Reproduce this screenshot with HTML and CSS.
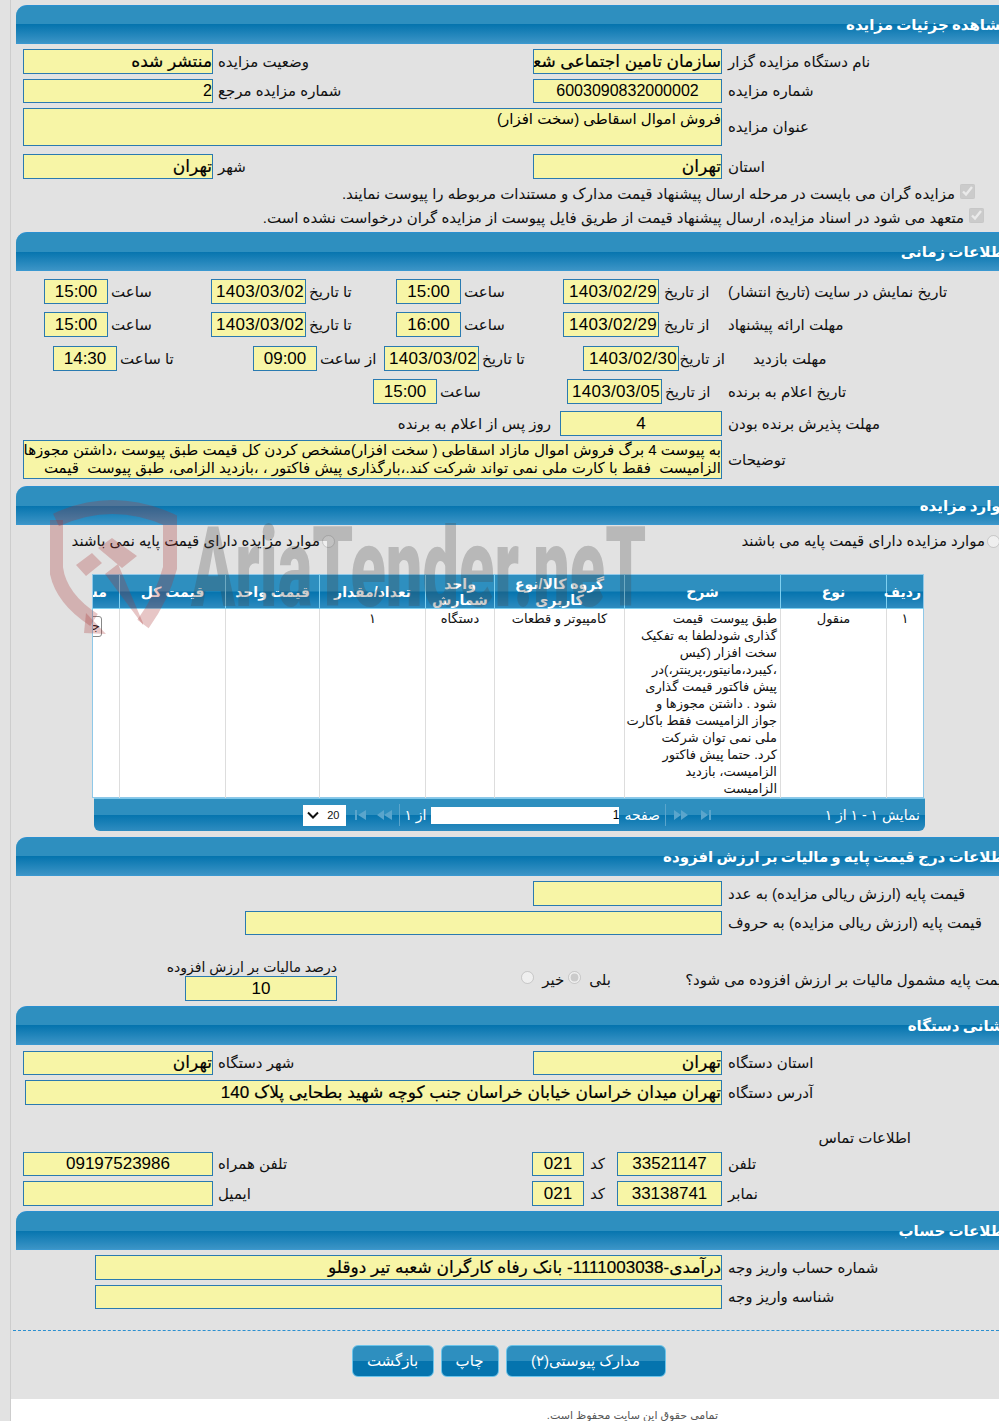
FILE: index.html
```html
<!DOCTYPE html>
<html lang="fa" dir="rtl">

<head>
    <meta charset="UTF-8">
    <title>مشاهده جزئیات مزایده</title>
    <link rel="stylesheet" href="styles.css">
</head>

<body>
    <div class="page">
        <div class="content">
            <h2 class="section-title">مشاهده جزئیات مزایده</h2>
            <div class="row">
                <span class="label main">نام دستگاه مزایده گزار</span>
                <div class="field w189 strong">سازمان تامین اجتماعی شعبه تهران</div>
                <span class="label w320">وضعیت مزایده</span>
                <div class="field w190 strong">منتشر شده</div>
            </div>
            <div class="row">
                <span class="label main">شماره مزایده</span>
                <div class="field w189 num short">6003090832000002</div>
                <span class="label w320">شماره مزایده مرجع</span>
                <div class="field w190 latin short">2</div>
            </div>
            <div class="row">
                <span class="label main">عنوان مزایده</span>
                <div class="field w699 tall">فروش اموال اسقاطی (سخت افزار)</div>
            </div>
            <div class="row gap8">
                <span class="label main">استان</span>
                <div class="field w189 strong">تهران</div>
                <span class="label w320">شهر</span>
                <div class="field w190 strong">تهران</div>
            </div>
            <label class="check first"><input type="checkbox" checked disabled>مزایده گران می بایست در مرحله ارسال پیشنهاد قیمت مدارک و مستندات مربوطه را پیوست نمایند.</label>
            <label class="check second"><input type="checkbox" checked disabled>متعهد می شود در اسناد مزایده، ارسال پیشنهاد قیمت از طریق فایل پیوست از مزایده گران درخواست نشده است.</label>

            <h2 class="section-title">اطلاعات زمانی</h2>
            <div class="row gap8">
                <span class="label main">تاریخ نمایش در سایت (تاریخ انتشار)</span>
                <span class="label w63">از تاریخ</span>
                <div class="field w96 date">1403/02/29</div>
                <span class="label w102">ساعت</span>
                <div class="field w65 time">15:00</div>
                <span class="label w90">تا تاریخ</span>
                <div class="field w95 date">1403/03/02</div>
                <span class="label w103">ساعت</span>
                <div class="field w64 time">15:00</div>
            </div>
            <div class="row gap8">
                <span class="label main">مهلت ارائه پیشنهاد</span>
                <span class="label w63">از تاریخ</span>
                <div class="field w96 date">1403/02/29</div>
                <span class="label w102">ساعت</span>
                <div class="field w65 time">16:00</div>
                <span class="label w90">تا تاریخ</span>
                <div class="field w95 date">1403/03/02</div>
                <span class="label w103">ساعت</span>
                <div class="field w64 time">15:00</div>
            </div>
            <div class="row gap9">
                <span class="label main indent">مهلت بازدید</span>
                <span class="label w43">از تاریخ</span>
                <div class="field w96 date">1403/02/30</div>
                <span class="label w104">تا تاریخ</span>
                <div class="field w95 date">1403/03/02</div>
                <span class="label w67">از ساعت</span>
                <div class="field w64 time">09:00</div>
                <span class="label w136">تا ساعت</span>
                <div class="field w64 time">14:30</div>
            </div>
            <div class="row gap8">
                <span class="label main">تاریخ اعلام به برنده</span>
                <span class="label w60">از تاریخ</span>
                <div class="field w95 date">1403/03/05</div>
                <span class="label w130">ساعت</span>
                <div class="field w64 time">15:00</div>
            </div>
            <div class="row gap7">
                <span class="label main">مهلت پذیرش برنده بودن</span>
                <div class="field w162 time">4</div>
                <span class="label after">روز پس از اعلام به برنده</span>
            </div>
            <div class="row gap4">
                <span class="label main">توضیحات</span>
                <div class="field w699 notes">به پیوست 4 برگ فروش اموال مازاد اسقاطی ( سخت افزار)مشخص کردن کل قیمت طبق پیوست ،داشتن مجوزها<br>الزامیست&nbsp; فقط با کارت ملی نمی تواند شرکت کند.،بارگذاری پیش فاکتور ، ،بازدید الزامی، طبق پیوست&nbsp; قیمت</div>
            </div>

            <h2 class="section-title items-title">موارد مزایده</h2>
            <div class="choice-row">
                <label class="choice"><input type="radio" name="base" disabled>موارد مزایده دارای قیمت پایه می باشند</label>
                <label class="choice"><input type="radio" name="base" disabled>موارد مزایده دارای قیمت پایه نمی باشند</label>
            </div>
            <div class="grid-wrap">
                <table class="grid">
                    <colgroup>
                        <col class="c37"><col class="c106"><col class="c156"><col class="c130"><col class="c69"><col class="c106"><col class="c94"><col class="c106"><col class="c27">
                    </colgroup>
                    <thead>
                        <tr>
                            <th>ردیف</th>
                            <th>نوع</th>
                            <th>شرح</th>
                            <th>گروه کالا/نوع کاربری</th>
                            <th>واحد شمارش</th>
                            <th>تعداد/مقدار</th>
                            <th>قیمت واحد</th>
                            <th>قیمت کل</th>
                            <th class="cut">مشاهده</th>
                        </tr>
                    </thead>
                    <tbody>
                        <tr>
                            <td>۱</td>
                            <td>منقول</td>
                            <td class="desc">طبق پیوست&nbsp; قیمت<br>گذاری شودلطفا به تفکیک<br>سخت افزار (کیس<br>،کیبرد،مانیتور،پرینتر،)در<br>پیش فاکتور قیمت گذاری<br>شود . داشتن مجوزها و<br>جواز الزامیست فقط باکارت<br>ملی نمی توان شرکت<br>کرد. حتما پیش فاکتور<br>الزامیست، بازدید<br>الزامیست</td>
                            <td>کامپیوتر و قطعات</td>
                            <td>دستگاه</td>
                            <td>۱</td>
                            <td></td>
                            <td></td>
                            <td class="cut"><span class="detail-btn">جزئیات</span></td>
                        </tr>
                    </tbody>
                </table>
                <div class="pager">
                    <span class="pager-info">نمایش ۱ - ۱ از ۱</span>
                    <svg class="pager-icons" width="38" height="10" viewBox="0 0 38 10"><path d="M37 0v10h-2V0zM34 5l-7-5v10zM14 5L7 0v10zM7 5L0 0v10z"/></svg>
                    <i class="pager-sep"></i>
                    <span>صفحه</span>
                    <div class="pager-input">1</div>
                    <span>از ۱</span>
                    <i class="pager-sep"></i>
                    <svg class="pager-icons" width="38" height="10" viewBox="0 0 38 10"><path d="M1 0v10h2V0zM4 5l8-5v10zM23 5l7-5v10zM30 5l8-5v10z"/></svg>
                    <div class="pager-select">
                        <span>20</span>
                        <svg width="12" height="8" viewBox="0 0 12 8"><path d="M1 1.5l5 5 5-5" fill="none" stroke="#111" stroke-width="2"/></svg>
                    </div>
                </div>
            </div>

            <h2 class="section-title after-grid">اطلاعات درج قیمت پایه و مالیات بر ارزش افزوده</h2>
            <div class="row">
                <span class="label main">قیمت پایه (ارزش ریالی مزایده) به عدد</span>
                <div class="field w189"></div>
            </div>
            <div class="row">
                <span class="label main">قیمت پایه (ارزش ریالی مزایده) به حروف</span>
                <div class="field w477 short"></div>
            </div>
            <div class="tax-row">
                <span class="tax-question">قیمت پایه مشمول مالیات بر ارزش افزوده می شود؟</span>
                <div class="tax-options">
                    <label><span>بلی</span><input type="radio" name="tax" checked disabled></label>
                    <label><span>خیر</span><input type="radio" name="tax" disabled></label>
                </div>
                <div class="tax-percent">
                    <span>درصد مالیات بر ارزش افزوده</span>
                    <div class="field time">10</div>
                </div>
            </div>

            <h2 class="section-title tax-next">نشانی دستگاه</h2>
            <div class="row gap6">
                <span class="label main">استان دستگاه</span>
                <div class="field w189 strong short">تهران</div>
                <span class="label w320">شهر دستگاه</span>
                <div class="field w190 strong short">تهران</div>
            </div>
            <div class="row">
                <span class="label main">آدرس دستگاه</span>
                <div class="field w697 strong">تهران میدان خراسان خیابان خراسان جنب کوچه شهید بطحایی پلاک 140</div>
            </div>
            <div class="contact-title">اطلاعات تماس</div>
            <div class="row">
                <span class="label main">تلفن</span>
                <div class="field w105 time short">33521147</div>
                <span class="label w33">کد</span>
                <div class="field w52 time short">021</div>
                <span class="label w319">تلفن همراه</span>
                <div class="field w190 time short">09197523986</div>
            </div>
            <div class="row">
                <span class="label main">نمابر</span>
                <div class="field w105 time">33138741</div>
                <span class="label w33">کد</span>
                <div class="field w52 time">021</div>
                <span class="label w319">ایمیل</span>
                <div class="field w190"></div>
            </div>

            <h2 class="section-title account-title">اطلاعات حساب</h2>
            <div class="row">
                <span class="label main">شماره حساب واریز وجه</span>
                <div class="field w627 strong">درآمدی-1111003038- بانک رفاه کارگران شعبه تیر دوقلو</div>
            </div>
            <div class="row">
                <span class="label main">شناسه واریز وجه</span>
                <div class="field w627 short"></div>
            </div>
        </div>

        <div class="actions">
            <button class="btn-back">بازگشت</button>
            <button class="btn-print">چاپ</button>
            <button class="btn-docs">مدارک پیوستی(۲)</button>
        </div>

        <div class="footer">تمامی حقوق این سایت محفوظ است.</div>

        <!-- watermark -->
        <svg class="mark-shield" width="130" height="145" viewBox="0 0 130 145">
            <path d="M6 22Q62 -4 120 22V70Q112 100 93 126" fill="none" stroke="#a33" stroke-opacity=".28" stroke-width="14"/>
            <path d="M6 22V70Q10 100 44 122" fill="none" stroke="#a33" stroke-opacity=".28" stroke-width="14"/>
            <path d="M36 115L56 136L34 135z" fill="#a33" fill-opacity=".28"/>
            <path d="M26 67L42 55L52 65L36 78zM48 50L62 40L87 58L72 70zM55 76L68 66L93 125L93 127z" fill="#a33" fill-opacity=".28"/>
        </svg>
        <div class="mark-text" dir="ltr">AriaTender.neT</div>
    </div>
</body>

</html>
```

FILE: styles.css
```css
html,
body {
    margin: 0;
    padding: 0;
    background-color: #e2e2e2;
    overflow: hidden;
}

body {
    height: 1421px;
    width: 999px;
    direction: ltr;
    font-family: "Liberation Sans", "DejaVu Sans", sans-serif;
    font-size: 15px;
    color: #111;
}

.page {
    position: relative;
    margin-left: 10px;
    width: 1000px;
    border-left: 1px solid #cdcdcd;
    height: 1421px;
}

.content {
    direction: rtl;
    margin-left: 5px;
    width: 994px;
    padding-top: 5px;
}

.section-title {
    margin: 0;
    height: 39px;
    box-sizing: border-box;
    border-top: 1px solid #2a8fd0;
    border-bottom: 1px solid #3a98d0;
    border-top-left-radius: 11px;
    background: linear-gradient(#2e8fbf 0, #2e8fbf 50%, #0574ae 50%, #3b94c6 100%);
    color: #fff;
    font-size: 15px;
    font-weight: bold;
    line-height: 38px;
    word-spacing: -1px;
    white-space: nowrap;
    overflow: hidden;
}

.row {
    display: flex;
    align-items: center;
    margin-top: 5px;
}

.row.gap4 {
    margin-top: 4px;
}

.row.gap6 {
    margin-top: 6px;
}

.row.gap7 {
    margin-top: 7px;
}

.row.gap8 {
    margin-top: 8px;
}

.row.gap9 {
    margin-top: 9px;
}

.label {
    box-sizing: border-box;
    flex: none;
    padding-left: 3px;
    text-align: left;
    white-space: nowrap;
}

.label.main {
    width: 288px;
    padding-left: 6px;
}

.label.main.indent {
    padding-left: 31px;
}

.label.after {
    margin-right: 9px;
}

.field {
    box-sizing: border-box;
    flex: none;
    height: 25px;
    border: 1px solid #2a7ab0;
    background-color: #f7f5a6;
    color: #000;
    font-size: 15px;
    line-height: 23px;
    white-space: nowrap;
    overflow: hidden;
}

.field.short {
    height: 24px;
    line-height: 22px;
}

.field.num {
    text-align: center;
    font-size: 16px;
}

.field.time {
    text-align: center;
    font-size: 17px;
}

.field.date {
    padding-right: 1px;
    font-size: 17px;
    letter-spacing: 0.3px;
}

.field.latin {
    font-size: 16px;
}

.field.strong {
    font-size: 17px;
    -webkit-text-stroke: 0.2px #000;
}

.field.tall {
    height: 38px;
    line-height: 20px;
}

.field.notes {
    height: 39px;
    line-height: 18px;
}

.w33 { width: 33px; padding-left: 6px; }
.w43 { width: 46px; margin-right: -3px; }
.w52 { width: 52px; }
.w60 { width: 60px; }
.w63 { width: 63px; padding-left: 5px; }
.w64 { width: 64px; }
.w65 { width: 65px; }
.w67 { width: 67px; }
.w90 { width: 90px; }
.w95 { width: 95px; }
.w96 { width: 96px; }
.w102 { width: 102px; }
.w103 { width: 103px; }
.w104 { width: 104px; }
.w105 { width: 105px; }
.w130 { width: 130px; }
.w136 { width: 136px; }
.w162 { width: 162px; }
.w189 { width: 189px; }
.w190 { width: 190px; }
.w319 { width: 319px; padding-left: 5px; }
.w320 { width: 320px; padding-left: 5px; }
.w477 { width: 477px; }
.w627 { width: 627px; }
.w697 { width: 697px; }
.w699 { width: 699px; }

.check {
    display: flex;
    align-items: center;
    height: 24px;
    white-space: nowrap;
}

.check input {
    width: 15px;
    height: 15px;
    margin: -6px 0 0 5px;
}

.check.first {
    margin-top: 3px;
    padding-right: 35px;
}

.check.second {
    padding-right: 26px;
    margin-bottom: 2px;
}

.items-title {
    margin-top: 7px;
}

.choice-row {
    display: flex;
    height: 30px;
    align-items: center;
    margin-top: 1px;
    margin-bottom: 18px;
}

.choice {
    display: flex;
    align-items: center;
    white-space: nowrap;
}

.choice input {
    width: 13px;
    height: 13px;
    margin: 0 0 0 2px;
}

.choice:first-child {
    box-sizing: border-box;
    width: 675px;
    padding-right: 10px;
}

.grid-wrap {
    width: 831px;
    margin-right: 86px;
}

.grid {
    table-layout: fixed;
    width: 831px;
    border-collapse: collapse;
    border: 1px solid #8fc8e8;
    background-color: #fff;
}

.c27 { width: 27px; }
.c37 { width: 37px; }
.c69 { width: 69px; }
.c94 { width: 94px; }
.c106 { width: 106px; }
.c130 { width: 130px; }
.c156 { width: 156px; }

.grid th {
    height: 33px;
    padding: 0 2px;
    background: linear-gradient(#2e8fbf 0, #2e8fbf 50%, #0574ae 50%, #2f8cc0 100%);
    border-left: 1px solid #7fd0f0;
    border-bottom: 1px solid #7fd0f0;
    color: #fff;
    font-size: 14px;
    font-weight: bold;
    line-height: 16px;
}

.grid td {
    height: 187px;
    padding: 1px 0 0;
    vertical-align: top;
    text-align: center;
    border-left: 1px solid #ddd;
    line-height: 17px;
    font-size: 13px;
}

.grid td.desc {
    text-align: right;
    padding-right: 3px;
    white-space: nowrap;
}

.grid .cut {
    overflow: hidden;
    white-space: nowrap;
    text-align: right;
    border-left: none;
}

.grid th.cut {
    padding-right: 12px;
}

.detail-btn {
    display: inline-block;
    box-sizing: border-box;
    margin: 6px 17px 0 0;
    width: 40px;
    height: 21px;
    padding-right: 1px;
    border: 1px solid #888;
    border-radius: 3px;
}

.pager {
    display: flex;
    align-items: center;
    margin: 0 -1px 0 1px;
    height: 33px;
    box-sizing: border-box;
    border-radius: 0 0 6px 6px;
    background: linear-gradient(#2e8fbf 0, #2e8fbf 50%, #0574ae 50%, #2f8cc0 100%);
    border-top: 1px solid #7fc8ea;
    color: #fff;
    font-size: 14px;
    white-space: nowrap;
}

.pager-info {
    box-sizing: border-box;
    width: 213px;
    padding-right: 5px;
}

.pager-icons {
    fill: #5aa5cc;
    flex: none;
}

.pager-sep {
    width: 1px;
    height: 22px;
    background-color: #5aa5cc;
    margin: 0 8px 0 5px;
}

.pager-sep:nth-of-type(2) {
    margin: 0 4px 0 7px;
}

.pager-input {
    width: 188px;
    height: 17px;
    line-height: 17px;
    margin: 0 5px;
    background-color: #fff;
    color: #000;
    font-size: 12px;
}

.pager-select {
    display: flex;
    align-items: center;
    justify-content: space-between;
    box-sizing: border-box;
    width: 43px;
    height: 21px;
    margin-right: 8px;
    padding: 0 7px 0 4px;
    background-color: #fff;
    color: #111;
    font-size: 11px;
}

.after-grid {
    margin-top: 6px;
}

.tax-row {
    display: flex;
    align-items: flex-end;
    height: 66px;
}

.tax-question {
    box-sizing: border-box;
    width: 324px;
    padding-bottom: 12px;
    text-align: left;
    white-space: nowrap;
}

.tax-options {
    display: flex;
    width: 349px;
    padding-right: 75px;
    box-sizing: border-box;
    padding-bottom: 12px;
}

.tax-options label {
    display: flex;
    align-items: center;
    margin-left: 4px;
}

.tax-options input {
    width: 13px;
    height: 13px;
    margin: -6px 8px 0 0;
}

.tax-percent {
    width: 152px;
    white-space: nowrap;
}

.tax-percent span {
    display: block;
    font-size: 14px;
    line-height: 17px;
}

.tax-next {
    margin-top: 5px;
}

.contact-title {
    margin-top: 24px;
    padding-right: 99px;
    height: 18px;
    line-height: 18px;
}

.account-title {
    margin-top: 5px;
}

.actions {
    direction: ltr;
    display: flex;
    justify-content: center;
    gap: 7px;
    box-sizing: border-box;
    width: 991px;
    height: 69px;
    margin: 21px 0 0 2px;
    padding-top: 14px;
    border-top: 1px dashed #2a8fd0;
}

.actions button {
    height: 32px;
    padding: 0;
    border: 1px solid #6cc4ea;
    border-radius: 6px;
    background: linear-gradient(#2e8fbf 0, #2e8fbf 50%, #0574ae 50%, #0574ae 100%);
    color: #fff;
    font-family: inherit;
    font-size: 15px;
}

.btn-back { width: 82px; }
.btn-print { width: 58px; }
.btn-docs { width: 160px; }

.footer {
    direction: rtl;
    background-color: #fff;
    height: 60px;
    padding: 10px 293px 0 0;
    box-sizing: border-box;
    color: #555;
    font-size: 11px;
}

.mark-shield {
    position: absolute;
    left: 39px;
    top: 498px;
    pointer-events: none;
}

.mark-text {
    position: absolute;
    left: 180px;
    top: 513px;
    font-family: Roboto, sans-serif;
    font-weight: 900;
    font-size: 112px;
    line-height: 110px;
    color: rgba(70, 70, 70, 0.27);
    white-space: nowrap;
    transform: scaleX(0.58);
    transform-origin: left center;
    pointer-events: none;
}
```
